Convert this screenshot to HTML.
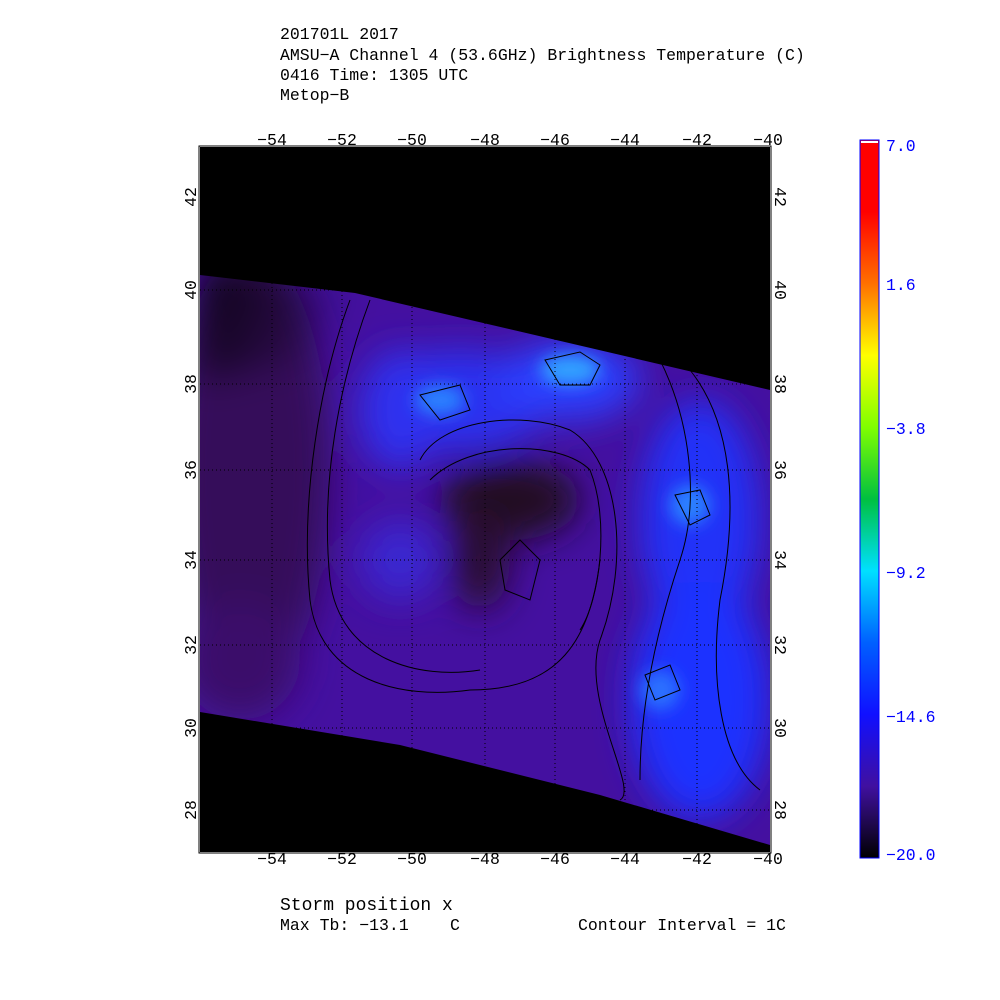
<!DOCTYPE html>
<html><head><meta charset="utf-8"><style>
html,body{margin:0;padding:0;background:#fff;width:1000px;height:1000px;overflow:hidden}
svg{position:absolute;left:0;top:0}
text{font-family:"Liberation Mono",monospace;font-size:16.5px}
</style></head><body>
<svg width="1000" height="1000" viewBox="0 0 1000 1000">
<defs>
<filter id="b" x="-50%" y="-50%" width="200%" height="200%"><feGaussianBlur stdDeviation="18"/></filter>
<filter id="b2" x="-50%" y="-50%" width="200%" height="200%"><feGaussianBlur stdDeviation="8"/></filter>
<clipPath id="c"><rect x="200" y="147" width="570" height="705"/></clipPath>
<linearGradient id="cb" x1="0" y1="0" x2="0" y2="1">
<stop offset="0" stop-color="#ff0000"/><stop offset="0.1" stop-color="#ff0000"/>
<stop offset="0.2" stop-color="#ff7000"/><stop offset="0.3" stop-color="#ffff00"/>
<stop offset="0.4" stop-color="#80ff00"/><stop offset="0.5" stop-color="#00c040"/>
<stop offset="0.6" stop-color="#00e0ff"/><stop offset="0.7" stop-color="#0060ff"/>
<stop offset="0.8" stop-color="#1010ff"/><stop offset="0.9" stop-color="#4010a0"/>
<stop offset="1" stop-color="#000000"/></linearGradient>
<linearGradient id="tl" x1="0" y1="0" x2="1" y2="0.3">
<stop offset="0" stop-color="#000" stop-opacity="0.8"/><stop offset="1" stop-color="#000" stop-opacity="0"/></linearGradient>
</defs>
<g fill="#000">
<text x="280" y="39">201701L 2017</text>
<text x="280" y="60">AMSU−A Channel 4 (53.6GHz) Brightness Temperature (C)</text>
<text x="280" y="80">0416 Time: 1305 UTC</text>
<text x="280" y="100">Metop−B</text>
</g>
<g clip-path="url(#c)">
<rect x="200" y="147" width="570" height="705" fill="#4410a0"/>
<g filter="url(#b)">
<ellipse cx="250" cy="470" rx="80" ry="220" fill="#34105a"/>
<ellipse cx="240" cy="660" rx="60" ry="60" fill="#3a0e6a"/>
<ellipse cx="460" cy="400" rx="90" ry="50" fill="#2a30f0"/>
<ellipse cx="400" cy="410" rx="40" ry="60" fill="#2e30f0"/>
<ellipse cx="570" cy="380" rx="70" ry="40" fill="#2a40ff"/>
<ellipse cx="700" cy="520" rx="60" ry="120" fill="#2430f8"/>
<ellipse cx="700" cy="700" rx="70" ry="120" fill="#1e30ff"/>
<ellipse cx="400" cy="560" rx="40" ry="40" fill="#3a28d0"/>
<ellipse cx="510" cy="500" rx="70" ry="40" fill="#241020"/>
<ellipse cx="480" cy="560" rx="30" ry="50" fill="#2a1030"/>
</g>
<polygon points="200,260 360,290 300,360 200,380" fill="url(#tl)" filter="url(#b)"/>
<g filter="url(#b2)">
<ellipse cx="440" cy="400" rx="25" ry="15" fill="#2a80ff"/>
<ellipse cx="570" cy="370" rx="30" ry="15" fill="#30a0ff"/>
<ellipse cx="690" cy="505" rx="20" ry="20" fill="#2a80ff"/>
<ellipse cx="660" cy="690" rx="20" ry="20" fill="#2a70ff"/>
</g>
<polygon points="200,147 770,147 770,390 355,293 200,275" fill="#000"/>
<polygon points="200,712 400,745 600,795 770,845 770,852 200,852" fill="#000"/>
<g fill="none" stroke="#000" stroke-width="1">
<path d="M350,300 C320,380 300,500 310,600 C320,680 400,700 470,690 C560,690 590,640 600,560"/>
<path d="M370,300 C340,380 320,480 330,580 C340,660 420,680 480,670"/>
<path d="M420,460 C440,420 520,410 570,430 C620,460 630,560 600,640 C580,700 640,790 620,800"/>
<path d="M430,480 C470,440 560,440 590,470 C610,520 600,600 580,630"/>
<path d="M660,360 C690,420 700,500 680,560 C660,620 640,700 640,780"/>
<path d="M690,370 C730,420 740,500 720,600 C710,680 720,760 760,790"/>
<path d="M420,395 L460,385 L470,410 L440,420 Z"/>
<path d="M545,360 L580,352 L600,365 L590,385 L560,385 Z"/>
<path d="M675,495 L700,490 L710,515 L690,525 Z"/>
<path d="M645,675 L670,665 L680,690 L655,700 Z"/>
<path d="M500,560 L520,540 L540,560 L530,600 L505,590 Z"/>
</g>
<g stroke="#000" stroke-dasharray="1,3" stroke-width="1">
<line x1="272" y1="147" x2="272" y2="852"/><line x1="342" y1="147" x2="342" y2="852"/>
<line x1="412" y1="147" x2="412" y2="852"/><line x1="485" y1="147" x2="485" y2="852"/>
<line x1="555" y1="147" x2="555" y2="852"/><line x1="625" y1="147" x2="625" y2="852"/>
<line x1="697" y1="147" x2="697" y2="852"/>
<line x1="200" y1="197" x2="770" y2="197"/><line x1="200" y1="290" x2="770" y2="290"/>
<line x1="200" y1="384" x2="770" y2="384"/><line x1="200" y1="470" x2="770" y2="470"/>
<line x1="200" y1="560" x2="770" y2="560"/><line x1="200" y1="645" x2="770" y2="645"/>
<line x1="200" y1="728" x2="770" y2="728"/><line x1="200" y1="810" x2="770" y2="810"/>
</g>
</g>
<rect x="199" y="146" width="572" height="707" fill="none" stroke="#000" stroke-width="1"/>
<g fill="#000" text-anchor="middle">
<text x="272" y="145">−54</text><text x="342" y="145">−52</text><text x="412" y="145">−50</text>
<text x="485" y="145">−48</text><text x="555" y="145">−46</text><text x="625" y="145">−44</text>
<text x="697" y="145">−42</text><text x="768" y="145">−40</text>
<text x="272" y="864">−54</text><text x="342" y="864">−52</text><text x="412" y="864">−50</text>
<text x="485" y="864">−48</text><text x="555" y="864">−46</text><text x="625" y="864">−44</text>
<text x="697" y="864">−42</text><text x="768" y="864">−40</text>
<g>
<text transform="translate(196,197) rotate(-90)">42</text>
<text transform="translate(196,290) rotate(-90)">40</text>
<text transform="translate(196,384) rotate(-90)">38</text>
<text transform="translate(196,470) rotate(-90)">36</text>
<text transform="translate(196,560) rotate(-90)">34</text>
<text transform="translate(196,645) rotate(-90)">32</text>
<text transform="translate(196,728) rotate(-90)">30</text>
<text transform="translate(196,810) rotate(-90)">28</text>
<text transform="translate(775,197) rotate(90)">42</text>
<text transform="translate(775,290) rotate(90)">40</text>
<text transform="translate(775,384) rotate(90)">38</text>
<text transform="translate(775,470) rotate(90)">36</text>
<text transform="translate(775,560) rotate(90)">34</text>
<text transform="translate(775,645) rotate(90)">32</text>
<text transform="translate(775,728) rotate(90)">30</text>
<text transform="translate(775,810) rotate(90)">28</text>
</g>
</g>
<rect x="860" y="140" width="19" height="718" fill="url(#cb)" stroke="#00f" stroke-width="1"/>
<rect x="861" y="141" width="17" height="2" fill="#fff"/>
<g fill="#00f">
<text x="886" y="151">7.0</text><text x="886" y="290">1.6</text><text x="886" y="434">−3.8</text>
<text x="886" y="578">−9.2</text><text x="886" y="722">−14.6</text><text x="886" y="860">−20.0</text>
</g>
<g fill="#000">
<text x="280" y="910" style="font-size:18px">Storm position x</text>
<text x="280" y="930">Max Tb: −13.1</text>
<text x="450" y="930">C</text>
<text x="578" y="930">Contour Interval = 1C</text>
</g>
</svg>
</body></html>
